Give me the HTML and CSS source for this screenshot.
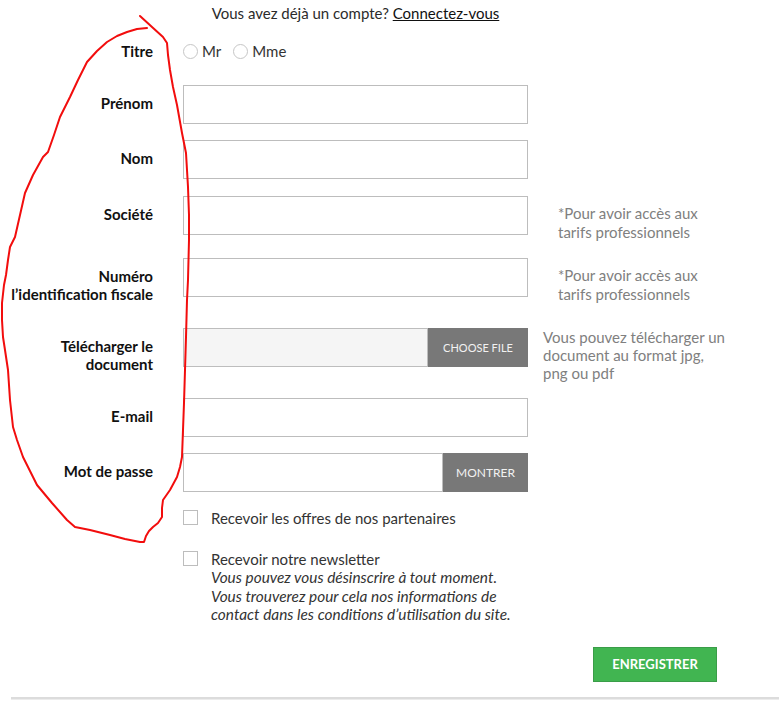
FILE: index.html
```html
<!DOCTYPE html>
<html lang="fr">
<head>
<meta charset="utf-8">
<title>Créer un compte</title>
<link rel="stylesheet" href="styles.css">
</head>
<body>
<div class="page">
  <form class="form">
    <div class="row row-login">
      <p class="login">Vous avez déjà un compte? <a href="#" class="login-link">Connectez-vous</a></p>
    </div>

    <div class="row row-titre">
      <label class="lbl">Titre</label>
      <div class="field radios">
        <span class="radio-opt"><span class="radio"></span>Mr</span>
        <span class="radio-opt"><span class="radio"></span>Mme</span>
      </div>
    </div>

    <div class="row">
      <label class="lbl">Prénom</label>
      <div class="field"><span class="input"></span></div>
    </div>

    <div class="row row-nom">
      <label class="lbl">Nom</label>
      <div class="field"><span class="input"></span></div>
    </div>

    <div class="row">
      <label class="lbl">Société</label>
      <div class="field"><span class="input"></span></div>
      <p class="note">*Pour avoir accès aux<br>tarifs professionnels</p>
    </div>

    <div class="row">
      <label class="lbl">Numéro<br>l’identification fiscale</label>
      <div class="field"><span class="input"></span></div>
      <p class="note">*Pour avoir accès aux<br>tarifs professionnels</p>
    </div>

    <div class="row">
      <label class="lbl">Télécharger le<br>document</label>
      <div class="field combo">
        <span class="input input-file"></span>
        <span class="btn-gray btn-file">CHOOSE FILE</span>
      </div>
      <p class="note note-file">Vous pouvez télécharger un<br>document au format jpg,<br>png ou pdf</p>
    </div>

    <div class="row">
      <label class="lbl">E-mail</label>
      <div class="field"><span class="input"></span></div>
    </div>

    <div class="row row-pass">
      <label class="lbl">Mot de passe</label>
      <div class="field combo">
        <span class="input"></span>
        <span class="btn-gray btn-show">MONTRER</span>
      </div>
    </div>

    <div class="row row-check1">
      <div class="field check-line">
        <span class="checkbox"></span>
        <span class="check-text">Recevoir les offres de nos partenaires</span>
      </div>
    </div>

    <div class="row row-check2">
      <div class="field check-line">
        <span class="checkbox"></span>
        <span class="check-text">Recevoir notre newsletter<br><em class="check-help">Vous pouvez vous désinscrire à tout moment.<br>Vous trouverez pour cela nos informations de<br>contact dans les conditions d’utilisation du site.</em></span>
      </div>
    </div>

    <div class="actions">
      <button type="button" class="btn-submit">ENREGISTRER</button>
    </div>
  </form>
  <div class="footer-line"></div>

  <svg class="scribble" width="779" height="716" viewBox="0 0 779 716" aria-hidden="true">
    <polyline fill="none" stroke="#f20d0d" stroke-width="2" stroke-linejoin="round" stroke-linecap="round"
      points="140,16 152,27 163,37 167,43 168,55 170,70 173,87 177,105 182,133 186,153 187,170 188,187 189,215 189,240 188,280 187,300 186,337 185,370 184,403 183,430 182,457 180,467 177,477 170,490 163,500 162,508 162,517 158,523 153,527 149,531 146,536 144,542 140,542 125,539 110,535 90,530 75,527 67,520 52,503 37,485 30,471 23,457 17,440 13,427 10,400 8,370 5,350 3,337 2,320 2,303 4,285 6,275 8,260 10,247 15,237 20,215 25,193 33,175 43,157 48,152 54,135 60,117 70,97 78,80 87,62 97,51 107,42 117,36 127,32 137,29 147,28"/>
  </svg>
</div>
</body>
</html>
```

FILE: styles.css
```css
* {
  box-sizing: border-box;
}

html, body {
  margin: 0;
  padding: 0;
  background: #fff;
}

body {
  font-family: "Lato", "Liberation Sans", sans-serif;
  font-size: 15px;
  color: #333;
}

.page {
  position: relative;
  width: 779px;
  height: 716px;
  overflow: hidden;
  padding-top: 4px;
}

.form {
  margin: 0;
}

.row {
  display: grid;
  grid-template-columns: 153px 375px 1fr;
  align-items: start;
  margin-bottom: 16px;
}

.row-login {
  margin-bottom: 11px;
}

.login {
  grid-column: 2;
  margin: 0 0 0 30px;
  line-height: 18px;
  text-align: center;
  color: #2b2b2b;
}

.login-link {
  color: #111;
  text-decoration: underline;
}

.lbl {
  grid-column: 1;
  text-align: right;
  font-weight: 700;
  font-size: 15px;
  line-height: 18px;
  padding: 9px 0;
  color: #111;
}

.field {
  grid-column: 2;
  margin-left: 30px;
  width: 345px;
}

.input {
  display: block;
  height: 39px;
  border: 1px solid #bdbdbd;
  background: #fff;
  flex: 1;
}

.input-file {
  background: #f5f5f5;
}

.combo {
  display: flex;
}

.btn-gray {
  display: flex;
  align-items: center;
  justify-content: center;
  background: #787878;
  color: #f2f2f2;
  height: 39px;
}

.btn-file {
  width: 100px;
  font-size: 11px;
}

.btn-show {
  width: 85px;
  font-size: 12px;
}

.note {
  grid-column: 3;
  margin: 0;
  padding: 8px 0 0 30px;
  line-height: 19px;
  color: #808080;
}

.note-file {
  padding: 0 0 0 15px;
  line-height: 18px;
}

.radios {
  display: flex;
  gap: 12px;
  padding-top: 9px;
  line-height: 18px;
}

.radio-opt {
  display: flex;
  align-items: center;
  gap: 4px;
  color: #333;
}

.radio {
  width: 15px;
  height: 15px;
  border: 1px solid #c6c6c6;
  border-radius: 50%;
  background: #fff;
}

.row-titre {
  margin-bottom: 16px;
}

.row-nom {
  margin-bottom: 17px;
}

.row-pass {
  margin-bottom: 17px;
}

.row-check1 {
  margin-bottom: 23px;
}

.check-line {
  display: flex;
  align-items: flex-start;
  gap: 13px;
}

.checkbox {
  flex: none;
  width: 15px;
  height: 15px;
  margin-top: 1px;
  border: 1px solid #bdbdbd;
  background: #fff;
}

.check-text {
  line-height: 18px;
  color: #333;
}

.row-check2 .check-text {
  line-height: 18.4px;
}

.check-help {
  font-style: italic;
  font-size: 15.4px;
  color: #333;
}

.actions {
  width: 717px;
  display: flex;
  justify-content: flex-end;
  margin-top: 23px;
}

.btn-submit {
  width: 124px;
  height: 35px;
  border: 1px solid #3a9d48;
  background: #41b551;
  color: #fff;
  font-family: "Lato", "Liberation Sans", sans-serif;
  font-weight: 700;
  font-size: 13px;
  padding: 0;
}

.footer-line {
  margin: 15px 0 0 11px;
  height: 3px;
  background: #dcdcdc;
  border-bottom: 1px solid #ececec;
}

.scribble {
  position: absolute;
  left: 0;
  top: 0;
  pointer-events: none;
}
```
